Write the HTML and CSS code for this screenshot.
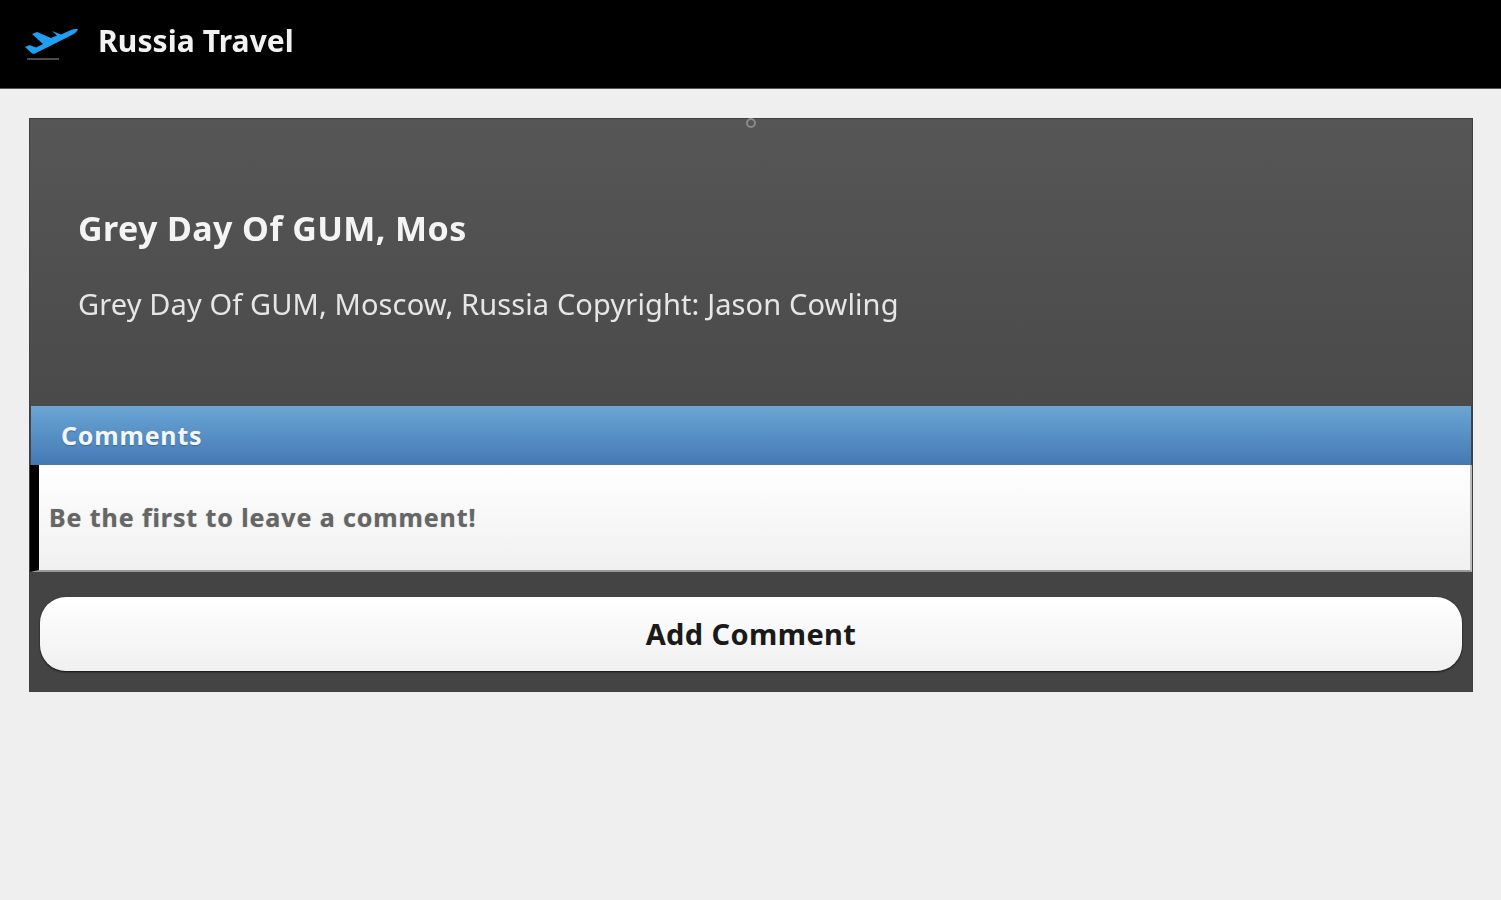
FILE: index.html
```html
<!DOCTYPE html>
<html lang="en">
<head>
    <meta charset="UTF-8">
    <title>Russia Travel</title>
    <link rel="stylesheet" href="styles.css">
</head>
<body>
    <header class="topbar">
        <svg class="logo" width="56" height="40" viewBox="0 0 56 40">
            <path d="M28 7 L37 10.5 L46 6.5 C50 5 53 4.8 54 5.5 C53 8 50 10 46 12 L23 23.5 L11 29.5 C9.5 30.2 8 29.5 7.5 29 L1 23 L5.5 21 L12 23.5 L19 20 L8 10 L13 8 L27 14 L33 11.5 Z" fill="#1e9ff2"/>
            <rect x="3" y="34" width="32" height="2" fill="#4a4a4a"/>
        </svg>
        <span class="brand">Russia Travel</span>
    </header>

    <main class="panel">
        <section class="photo">
            <span class="dot"></span>
            <h1>Grey Day Of GUM, Mos</h1>
            <p>Grey Day Of GUM, Moscow, Russia Copyright: Jason Cowling</p>
        </section>
        <div class="comments-bar">Comments</div>
        <div class="comment-row">Be the first to leave a comment!</div>
        <div class="actions">
            <button class="add-btn">Add Comment</button>
        </div>
    </main>
</body>
</html>
```

FILE: styles.css
```css
html, body {
    margin: 0;
    height: 100%;
}
body {
    background-color: #efefef;
    font-family: "Noto Sans", Roboto, sans-serif;
    overflow: hidden;
}
.topbar {
    display: flex;
    align-items: center;
    height: 89px;
    padding: 0 0 8px 24px;
    box-sizing: border-box;
    background-color: #000;
    border-bottom: 1px solid #555;
}
.logo {
    margin-right: 18px;
    margin-top: 8px;
}
.brand {
    color: #f2f2f2;
    font-size: 30px;
    font-weight: 700;
    letter-spacing: 0.1px;
    filter: blur(0.7px);
}
.panel {
    margin: 29px 28px 0 29px;
    border: 1px solid #404040;
    background-color: #444;
}
.photo {
    position: relative;
    height: 287px;
    padding: 88px 48px 0;
    box-sizing: border-box;
    background: linear-gradient(#565656, #4a4a4a);
}
.dot {
    position: absolute;
    top: -1px;
    left: 716px;
    width: 6px;
    height: 6px;
    border: 2px solid #8a8a8a;
    border-radius: 50%;
    filter: blur(0.5px);
}
.photo h1 {
    margin: 0;
    color: #f4f4f4;
    font-size: 34px;
    line-height: 42px;
    font-weight: 700;
    letter-spacing: 0.4px;
    filter: blur(0.7px);
}
.photo p {
    margin: 36px 0 0;
    color: #e6e6e6;
    font-size: 29px;
    line-height: 38px;
    letter-spacing: 0.12px;
    filter: blur(0.7px);
}
.comments-bar {
    height: 59px;
    margin: 0 1px;
    padding-left: 30px;
    line-height: 58px;
    box-sizing: border-box;
    background: linear-gradient(#6aa6d6, #4379b3);
    color: #f4f7fa;
    font-size: 25px;
    font-weight: 700;
    letter-spacing: 0.8px;
    text-shadow: 0 1px 1px #3a6a9a;
}
.comment-row {
    height: 107px;
    padding-left: 10px;
    margin-right: 0;
    line-height: 104px;
    box-sizing: border-box;
    border-left: 9px solid #000;
    border-right: 2px solid #bbb;
    border-bottom: 2px solid #999;
    background: linear-gradient(#fff, #f0f0f0);
    color: #666;
    font-size: 25px;
    font-weight: 700;
    letter-spacing: 0.9px;
    text-shadow: 0 0 1px #aaa;
}
.actions {
    padding: 25px 10px 20px;
}
.add-btn {
    display: block;
    width: 100%;
    height: 74px;
    padding: 0 0 2px;
    border: none;
    border-radius: 26px;
    background: linear-gradient(#fff, #f0f0f0);
    box-shadow: 0 1px 2px #111;
    color: #1a1a1a;
    font-family: inherit;
    font-size: 29px;
    font-weight: 700;
    letter-spacing: 0.4px;
}
```
